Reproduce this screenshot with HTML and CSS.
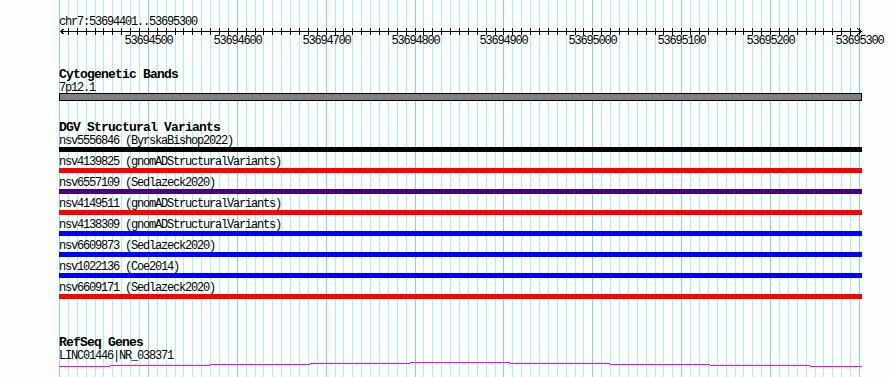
FILE: index.html
```html
<!DOCTYPE html>
<html lang="en">
<head>
  <meta charset="UTF-8" />
  <title>chr7:53694401..53695300</title>
  <link rel="stylesheet" href="styles.css">
</head>
<body>
  <div class="view">
    <!-- grid lines, filled in by the script below -->
    <svg class="grid" id="grid" width="890" height="377" shape-rendering="crispEdges"></svg>

    <div class="tracks">
      <!-- Ruler -->
      <div class="ruler">
        <div class="small">chr7:53694401..53695300</div>
        <svg class="ruler-axis" id="ruler" width="831" height="20" shape-rendering="crispEdges"></svg>
      </div>

      <!-- Cytogenetic Bands -->
      <div class="track cyto">
        <div class="track-title">Cytogenetic Bands</div>
        <div class="small">7p12.1</div>
        <div class="band"></div>
      </div>

      <!-- DGV Structural Variants -->
      <div class="track dgv">
        <div class="track-title">DGV Structural Variants</div>
        <div class="variant">
          <div class="small">nsv5556846 (ByrskaBishop2022)</div>
          <div class="bar black"></div>
        </div>
        <div class="variant">
          <div class="small">nsv4139825 (gnomADStructuralVariants)</div>
          <div class="bar red"></div>
        </div>
        <div class="variant">
          <div class="small">nsv6557109 (Sedlazeck2020)</div>
          <div class="bar purple"></div>
        </div>
        <div class="variant">
          <div class="small">nsv4149511 (gnomADStructuralVariants)</div>
          <div class="bar red"></div>
        </div>
        <div class="variant">
          <div class="small">nsv4138309 (gnomADStructuralVariants)</div>
          <div class="bar blue"></div>
        </div>
        <div class="variant">
          <div class="small">nsv6609873 (Sedlazeck2020)</div>
          <div class="bar blue"></div>
        </div>
        <div class="variant">
          <div class="small">nsv1022136 (Coe2014)</div>
          <div class="bar blue"></div>
        </div>
        <div class="variant">
          <div class="small">nsv6609171 (Sedlazeck2020)</div>
          <div class="bar red"></div>
        </div>
      </div>

      <!-- RefSeq Genes -->
      <div class="track refseq">
        <div class="track-title">RefSeq Genes</div>
        <div class="small">LINC01446|NR_038371</div>
        <svg class="intron" width="803" height="8" shape-rendering="crispEdges">
          <rect x="0" y="5" width="51" height="1" />
          <rect x="51" y="4" width="100" height="1" />
          <rect x="151" y="3" width="100" height="1" />
          <rect x="251" y="2" width="100" height="1" />
          <rect x="351" y="1" width="100" height="1" />
          <rect x="451" y="2" width="100" height="1" />
          <rect x="551" y="3" width="100" height="1" />
          <rect x="651" y="4" width="100" height="1" />
          <rect x="751" y="5" width="52" height="1" />
        </svg>
      </div>
    </div>
  </div>

  <script>
    const NS = "http://www.w3.org/2000/svg";
    const LEFT = 59;
    const START = 53694400;
    const WIDTH = 800;
    const STEPS = 90; // one step = 10bp

    function stepX(i) {
      return Math.round(i * WIDTH / STEPS);
    }

    function el(name, attrs) {
      const node = document.createElementNS(NS, name);
      for (const key in attrs) node.setAttribute(key, attrs[key]);
      return node;
    }

    // vertical grid lines
    const grid = document.getElementById("grid");
    for (let i = 0; i <= STEPS; i++) {
      const major = i % 10 === 0;
      grid.appendChild(el("rect", {
        x: LEFT + stepX(i), y: 0, width: 1, height: 377,
        class: major ? "major" : "minor"
      }));
    }

    // ruler: axis line, arrows, ticks and labels
    const ruler = document.getElementById("ruler");
    ruler.appendChild(el("rect", { x: 1, y: 4, width: 802, height: 1, class: "ink" }));
    ruler.appendChild(el("path", { d: "M1.5 4.5 L5.5 1.5 M1.5 4.5 L5.5 7.5 M802.5 4.5 L798.5 1.5 M802.5 4.5 L798.5 7.5", class: "arrow" }));
    for (let i = 1; i <= STEPS; i++) {
      const x = stepX(i);
      ruler.appendChild(el("rect", { x: x, y: 1, width: 1, height: 7, class: "ink" }));
      if (i % 10 === 0) {
        const label = el("text", { x: x + 0.5, y: 16.5, class: "tick-label" });
        label.textContent = START + i * 10;
        ruler.appendChild(label);
      }
    }
  </script>
</body>
</html>
```

FILE: styles.css
```css
/* Global Styles */
body {
  background-color: #fcfefc;
  color: #000;
  margin: 0;
  padding: 0;
  font-family: "Liberation Mono", "DejaVu Sans Mono", monospace;
}
.view {
  position: relative;
  width: 890px;
  height: 377px;
  overflow: hidden;
}
/* Grid behind all tracks */
.grid {
  position: absolute;
  left: 0;
  top: 0;
}
.grid .minor {
  fill: #aeeeee;
}
.grid .major {
  fill: #87cefa;
}
.tracks {
  position: relative;
  padding-left: 59px;
  width: 803px;
}
/* Text in the small and bold bitmap-like fonts */
.small {
  font-size: 12px;
  line-height: 16px;
  height: 13px;
  letter-spacing: -1.2px;
  white-space: nowrap;
}
.track-title {
  font-size: 13px;
  font-weight: bold;
  line-height: 16px;
  height: 13px;
  letter-spacing: -0.8px;
  white-space: nowrap;
}
/* Ruler */
.ruler {
  padding-top: 14px;
}
.ruler-axis {
  display: block;
  overflow: visible;
}
.ruler-axis .ink {
  fill: #000;
}
.ruler-axis .arrow {
  stroke: #000;
  stroke-width: 1;
  fill: none;
}
.tick-label {
  font-family: "Liberation Mono", "DejaVu Sans Mono", monospace;
  font-size: 12px;
  letter-spacing: -1.2px;
  text-anchor: middle;
  fill: #000;
}
/* Tracks */
.cyto {
  margin-top: 20px;
}
.band {
  height: 6px;
  border: 1px solid #000;
  background: #808080;
}
.dgv {
  margin-top: 19px;
}
.variant {
  padding-bottom: 2px;
}
.bar {
  height: 5px;
  margin-top: 1px;
}
.bar.black {
  background: #000;
}
.bar.red {
  background: #ff0000;
}
.bar.purple {
  background: #4b0082;
}
.bar.blue {
  background: #0000ff;
}
.refseq {
  margin-top: 34px;
}
.intron {
  display: block;
  fill: #ff00ff;
}
```
